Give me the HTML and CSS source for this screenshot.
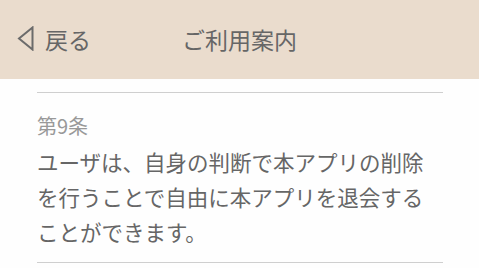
FILE: index.html
```html
<!DOCTYPE html>
<html lang="ja">
<head>
<meta charset="utf-8">
<link rel="stylesheet" href="styles.css">
</head>
<body>
<header class="bar">
  <div class="back">
    <svg class="back-icon" width="17" height="25" viewBox="0 0 17 25"><path d="M15.5 1.5 L2 12.5 L15.5 23.5 Z" fill="none" stroke="#6b6b6b" stroke-width="2" stroke-linejoin="miter"/></svg>
    <span>戻る</span>
  </div>
  <div class="title">ご利用案内</div>
</header>
<main class="content">
  <section class="article">
    <h2 class="art-title">第9条</h2>
    <p class="art-body">ユーザは、自身の判断で本アプリの削除を行うことで自由に本アプリを退会することができます。</p>
  </section>
</main>
</body>
</html>
```
FILE: styles.css
```css
html, body {
  margin: 0;
  padding: 0;
  background: #fefefe;
  font-family: "Noto Sans CJK JP", "Noto Sans", sans-serif;
}
.bar {
  height: 79px;
  background: #eadccd;
  display: flex;
  align-items: center;
  position: relative;
  color: #666;
}
.back {
  display: flex;
  align-items: center;
  gap: 11px;
  padding-left: 17px;
  font-size: 23px;
  margin-top: -2px;
}
.title {
  position: absolute;
  left: 0;
  right: 0;
  top: 0;
  bottom: 0;
  display: flex;
  align-items: center;
  justify-content: center;
  font-size: 23px;
  margin-top: -2px;
  pointer-events: none;
}
.content {
  padding: 13px 36px 0 37px;
}
.article {
  border-top: 1.5px solid #cfcfcf;
  border-bottom: 1.5px solid #cfcfcf;
  padding: 19px 0 13px;
}
.art-title {
  margin: 0 0 4px;
  font-size: 20px;
  font-weight: normal;
  color: #999;
  line-height: 28px;
}
.art-body {
  margin: 0;
  font-size: 21.5px;
  color: #666;
  line-height: 35px;
}
```
